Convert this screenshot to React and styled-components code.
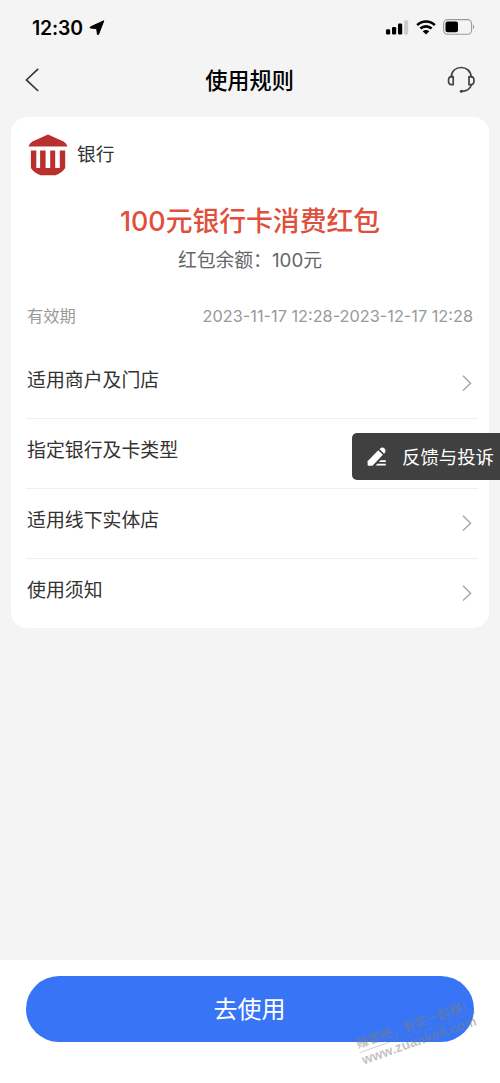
import React from "react";
import styled, { createGlobalStyle } from "styled-components";

const GlobalStyle = createGlobalStyle`
  * { box-sizing: border-box; }
  body {
    margin: 0;
    background: #f4f4f4;
    font-family: Inter, "Noto Sans CJK SC", sans-serif;
    color: #333;
  }
`;

const Screen = styled.div`
  position: relative;
  display: flex;
  flex-direction: column;
  width: 500px;
  height: 1083px;
  overflow: hidden;
  background: #f4f4f4;
`;

const StatusBar = styled.div`
  display: flex;
  align-items: center;
  justify-content: space-between;
  height: 54px;
  padding: 0 25px 0 32px;
`;

const Clock = styled.div`
  display: flex;
  align-items: center;
  gap: 6px;
  padding-top: 1px;
  font-size: 19.4px;
  font-weight: 600;
  letter-spacing: -0.15px;
  line-height: 24px;
  color: #000;
`;

const Indicators = styled.div`
  display: flex;
  align-items: center;
  gap: 7px;
`;

const NavBar = styled.header`
  display: flex;
  align-items: center;
  justify-content: space-between;
  height: 52px;
  padding: 0 24px;
`;

const NavTitle = styled.h1`
  margin: 0;
  padding: 1px 0 0 12px;
  font-size: 22.2px;
  font-weight: 500;
  line-height: 30px;
  color: #000;
`;

const Card = styled.main`
  height: 511px;
  margin: 11px 11px 0;
  border-radius: 16px;
  background: #fff;
`;

const Bank = styled.div`
  display: flex;
  align-items: center;
  gap: 9px;
  height: 75px;
  padding-left: 17px;
  font-size: 18.7px;
  line-height: 26px;
`;

const Coupon = styled.section`
  display: flex;
  flex-direction: column;
  align-items: center;
  height: 108px;
  padding-top: 10px;
`;

const CouponName = styled.h2`
  margin: 0;
  font-size: 26.8px;
  font-weight: 500;
  line-height: 38px;
  color: #df4f3c;
`;

const Balance = styled.div`
  margin-top: 9px;
  font-size: 18.8px;
  line-height: 24px;
  color: #666;
`;

const Validity = styled.div`
  display: flex;
  justify-content: space-between;
  height: 48px;
  padding: 4px 16px 0;
  font-size: 16.3px;
  line-height: 24px;
  color: #999;
`;

const RuleList = styled.div`
  display: flex;
  flex-direction: column;
  padding: 0 11px 0 15px;
`;

const RuleRow = styled.div`
  display: flex;
  align-items: center;
  justify-content: space-between;
  height: 70px;
  padding: 0 6px 2px 1px;
  border-top: 1px solid ${(p) => (p.$first ? "transparent" : "#efefef")};
`;

const RuleLabel = styled.span`
  padding-bottom: 3px;
  font-size: 18.9px;
  line-height: 26px;
  color: #333;
`;

const Footer = styled.footer`
  height: 123px;
  margin-top: auto;
  padding: 16px 26px 0;
  background: #fff;
`;

const UseButton = styled.button`
  display: flex;
  align-items: center;
  justify-content: center;
  width: 448px;
  height: 65.5px;
  padding: 2px 1px 0 0;
  border: 0;
  border-radius: 33px;
  background: #3875f6;
  color: #fff;
  font-family: inherit;
  font-size: 24px;
  line-height: 34px;
`;

const Feedback = styled.div`
  position: absolute;
  top: 433px;
  right: 0;
  display: flex;
  align-items: center;
  gap: 14px;
  width: 148px;
  height: 47px;
  padding: 1px 0 0 14px;
  border-radius: 5px 0 0 5px;
  background: #404040;
  color: #fff;
  font-size: 18.4px;
  line-height: 26px;
  white-space: nowrap;
`;

const Watermark = styled.div`
  position: absolute;
  left: 356px;
  top: 1016px;
  width: 122px;
  transform: rotate(-19.3deg);
  color: rgba(125, 125, 125, 0.48);
  font-family: "Liberation Sans", "Noto Sans CJK SC", sans-serif;
  font-weight: 700;
  white-space: nowrap;
`;

const Slogan = styled.div`
  border-bottom: 1px solid rgba(125, 125, 125, 0.4);
  font-size: 12.3px;
  line-height: 16px;
`;

const Site = styled.div`
  font-size: 13.6px;
  line-height: 15px;
`;

const LocationArrow = () => (
  <svg width="16" height="16" viewBox="0 0 16 16">
    <path d="M14.8 .8 9.6 14.2Q8.8 15.6 8.4 14.2L7.7 8.6 1.6 8Q.4 7.7 1.4 6.9Z" fill="#000" stroke="#000" strokeLinejoin="round" strokeWidth="1" />
  </svg>
);

const Signal = () => (
  <svg width="23" height="15" viewBox="0 0 23 15">
    <rect x="0" y="9.2" width="4.2" height="5.3" rx="1.3" />
    <rect x="6" y="7" width="4.2" height="7.5" rx="1.3" />
    <rect x="12" y="3.6" width="4.2" height="10.9" rx="1.3" />
    <rect x="18" y="0.3" width="4.2" height="14.2" rx="1.3" fill="#ccc" />
  </svg>
);

const Wifi = () => (
  <svg width="20" height="15" viewBox="0 0 20 15">
    <g fill="none" stroke="#000" strokeWidth="2.7">
      <path d="M1.2 5.1C6.2.3 13.8.3 18.8 5.1" />
      <path d="M4.4 8.6C7.6 5.7 12.4 5.7 15.6 8.6" />
    </g>
    <path d="M6.7 11.2Q10 8.6 13.3 11.2L10 14.6Z" />
  </svg>
);

const Battery = () => (
  <svg width="32" height="16" viewBox="0 0 32 16">
    <rect x=".6" y=".6" width="28" height="14.6" rx="4" fill="none" stroke="#999" strokeWidth="1.1" />
    <rect x="2.5" y="2.6" width="12.5" height="10.6" rx="2" />
    <path d="M30 5.4Q32.4 7.8 30 10.2Z" fill="#999" />
  </svg>
);

const BackIcon = () => (
  <svg width="16" height="24" viewBox="0 0 16 24">
    <path d="M14.2 .8 2.4 11.9 14.2 23" fill="none" stroke="#333" strokeWidth="1.6" />
  </svg>
);

const HeadsetIcon = () => (
  <svg width="29" height="28" viewBox="0 0 29 28">
    <g fill="none" stroke="#444" strokeWidth="1.7" strokeLinecap="round" strokeLinejoin="round">
      <path d="M4.3 11C4.4 5 8.7 1.5 14.1 1.5S23.9 5 24.1 11" />
      <path d="M6.2 10.6H4.4C2.6 10.6 1.5 12.2 1.5 14.6S2.6 18.7 4.4 18.7H6.2Z" />
      <path d="M22 10.6H24.1C25.9 10.6 27 12.2 27 14.6S25.9 18.7 24.1 18.7H22Z" />
      <path d="M24.2 19C23.4 22.7 19.6 25.3 14.5 25.3" />
    </g>
    <circle cx="14.3" cy="25.2" r="1.5" fill="#444" />
  </svg>
);

const BankLogo = () => (
  <svg width="40" height="42" viewBox="0 0 40 42">
    <g fill="#b9302f">
      <path d="M20 .5 35 7.2Q39 9.6 39.4 12.5H.6Q1 9.6 5 7.2Z" />
      <path d="M2.9 16.5H8.3V34H12.1V16.5H17.6V34H22.2V16.5H27.2V34H31.8V16.5H37.2V34Q33.8 39.4 27.5 41.2H12.7Q6.3 39.4 2.9 34Z" />
    </g>
  </svg>
);

const Chevron = () => (
  <svg width="10" height="16" viewBox="0 0 10 16">
    <path d="M1 .8 8.6 8.2 1 15.5" fill="none" stroke="#a6a6a6" strokeWidth="1.4" />
  </svg>
);

const PencilIcon = () => (
  <svg width="22" height="22" viewBox="0 0 22 22" fill="#fff">
    <path d="M12.2 4.2 16.9 8.8 6.5 19.7H2.3Q1.6 19.7 1.6 19V15.2Z" />
    <path d="M13.4 3.1C15.5 .8 17.3 1.1 18.5 2.4 20 3.9 20 5.6 18.1 7.7Z" />
    <path d="M14.6 14.2H19.8V15.9H13ZM11.3 17.8H19.8V19.6H9.6Z" />
  </svg>
);

const rules = ["适用商户及门店", "指定银行及卡类型", "适用线下实体店", "使用须知"];

export default function App() {
  return (
    <>
      <GlobalStyle />
      <Screen>
        <StatusBar>
          <Clock>
            12:30
            <LocationArrow />
          </Clock>
          <Indicators>
            <Signal />
            <Wifi />
            <Battery />
          </Indicators>
        </StatusBar>
        <NavBar>
          <BackIcon />
          <NavTitle>使用规则</NavTitle>
          <HeadsetIcon />
        </NavBar>
        <Card>
          <Bank>
            <BankLogo />
            银行
          </Bank>
          <Coupon>
            <CouponName>100元银行卡消费红包</CouponName>
            <Balance>红包余额：100元</Balance>
          </Coupon>
          <Validity>
            <span>有效期</span>
            <span>2023-11-17 12:28-2023-12-17 12:28</span>
          </Validity>
          <RuleList>
            {rules.map((label, i) => (
              <RuleRow key={label} $first={i === 0}>
                <RuleLabel>{label}</RuleLabel>
                <Chevron />
              </RuleRow>
            ))}
          </RuleList>
        </Card>
        <Footer>
          <UseButton>去使用</UseButton>
        </Footer>
        <Feedback>
          <PencilIcon />
          反馈与投诉
        </Feedback>
        <Watermark>
          <Slogan>赚客吧，有奖一起赚！</Slogan>
          <Site>www.zuanke8.com</Site>
        </Watermark>
      </Screen>
    </>
  );
}
